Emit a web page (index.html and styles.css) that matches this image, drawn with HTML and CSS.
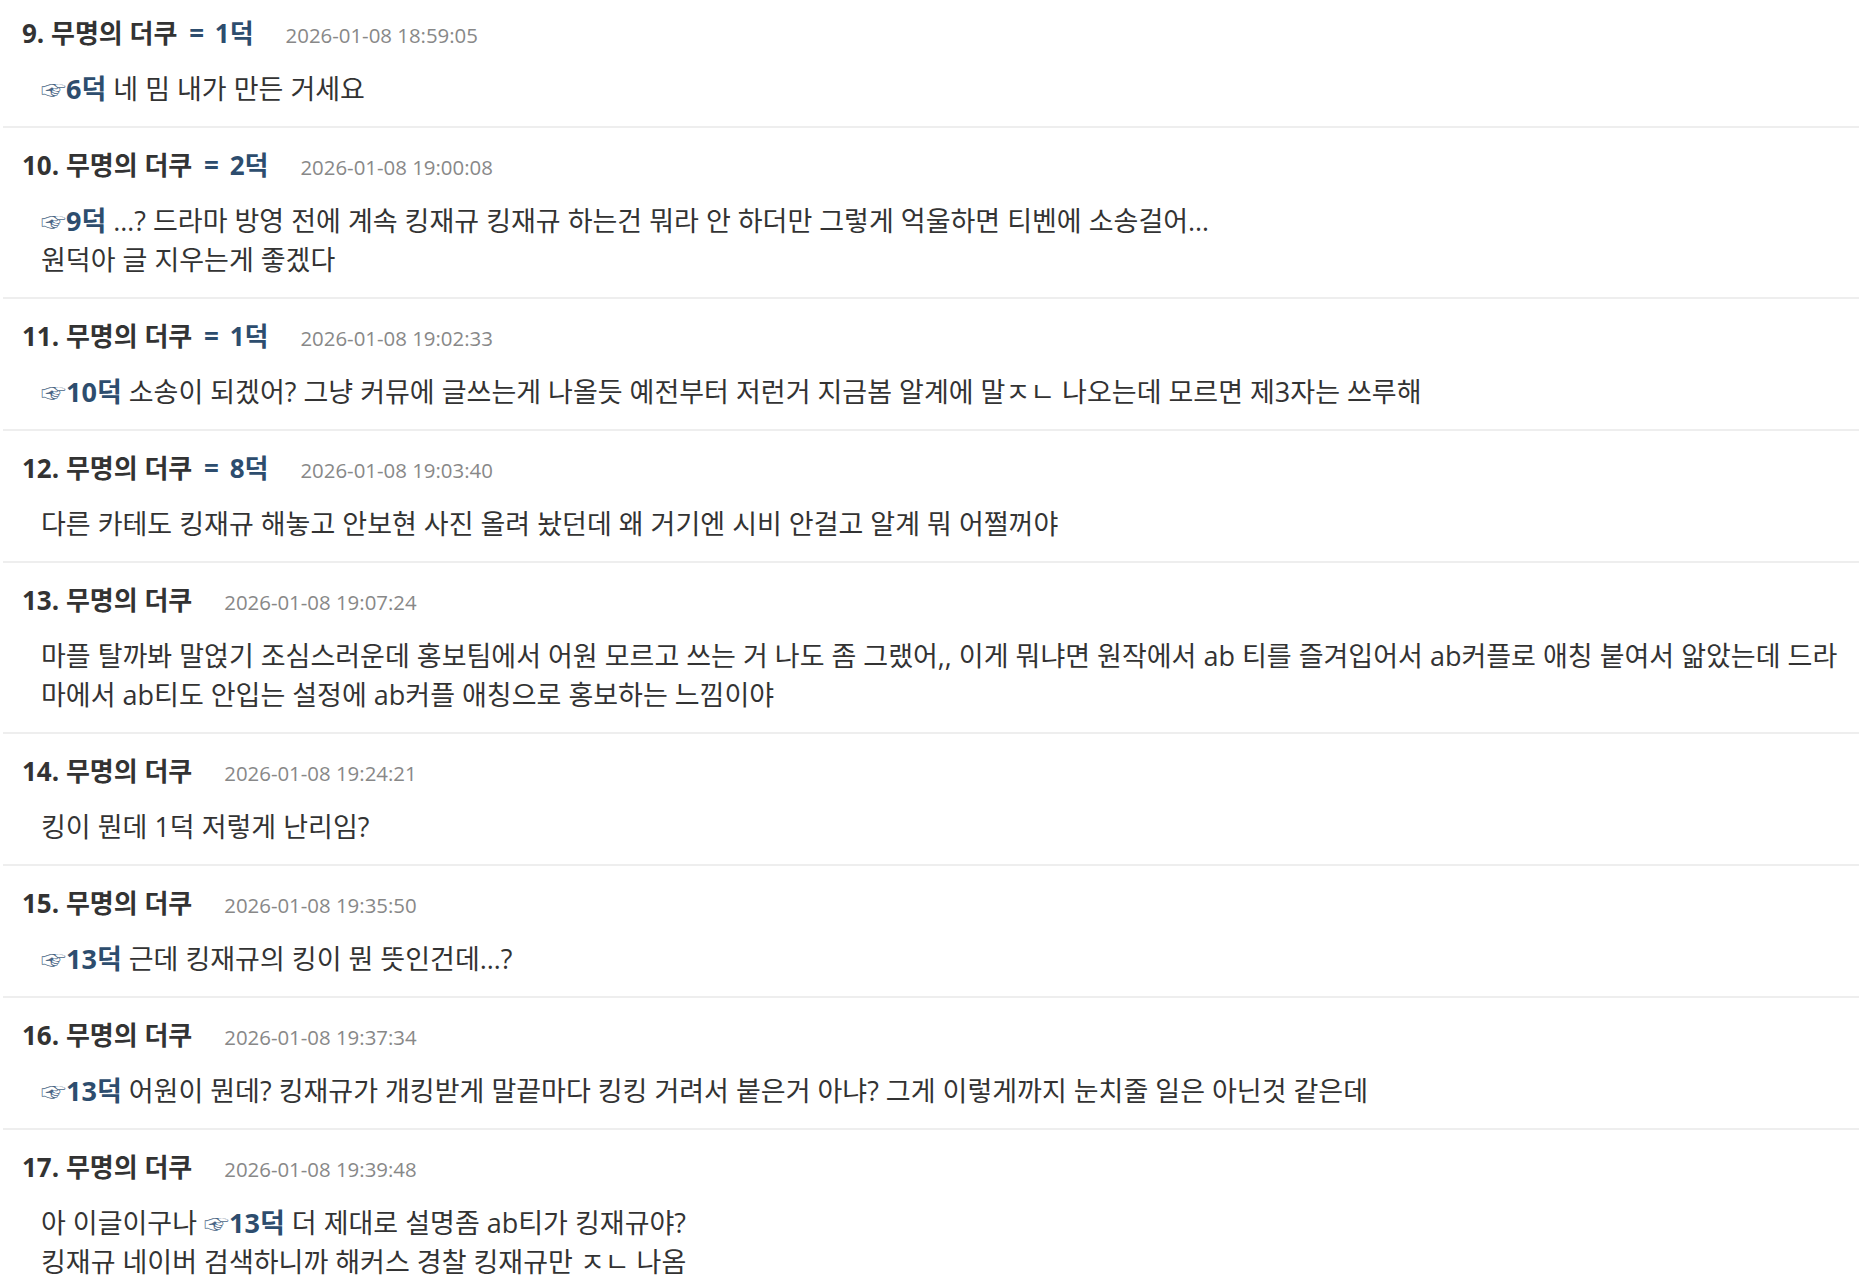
FILE: index.html
```html
<!DOCTYPE html>
<html lang="ko">
<head>
<meta charset="utf-8">
<title>댓글</title>
<link rel="stylesheet" href="styles.css">
</head>
<body>
<div class="thread">
  <div class="comment">
    <div class="head"><span class="name">9. 무명의 더쿠</span> <span class="tag">= 1덕</span><span class="date">2026-01-08 18:59:05</span></div>
    <div class="body"><span class="ref"><span class="hand">☞</span>6덕</span> 네 밈 내가 만든 거세요</div>
  </div>
  <div class="comment">
    <div class="head"><span class="name">10. 무명의 더쿠</span> <span class="tag">= 2덕</span><span class="date">2026-01-08 19:00:08</span></div>
    <div class="body"><span class="ref"><span class="hand">☞</span>9덕</span> …? 드라마 방영 전에 계속 킹재규 킹재규 하는건 뭐라 안 하더만 그렇게 억울하면 티벤에 소송걸어…<br>원덕아 글 지우는게 좋겠다</div>
  </div>
  <div class="comment">
    <div class="head"><span class="name">11. 무명의 더쿠</span> <span class="tag">= 1덕</span><span class="date">2026-01-08 19:02:33</span></div>
    <div class="body"><span class="ref"><span class="hand">☞</span>10덕</span> 소송이 되겠어? 그냥 커뮤에 글쓰는게 나올듯 예전부터 저런거 지금봄 알계에 말ㅈㄴ 나오는데 모르면 제3자는 쓰루해</div>
  </div>
  <div class="comment">
    <div class="head"><span class="name">12. 무명의 더쿠</span> <span class="tag">= 8덕</span><span class="date">2026-01-08 19:03:40</span></div>
    <div class="body">다른 카테도 킹재규 해놓고 안보현 사진 올려 놨던데 왜 거기엔 시비 안걸고 알계 뭐 어쩔꺼야</div>
  </div>
  <div class="comment">
    <div class="head"><span class="name">13. 무명의 더쿠</span><span class="date">2026-01-08 19:07:24</span></div>
    <div class="body">마플 탈까봐 말얹기 조심스러운데 홍보팀에서 어원 모르고 쓰는 거 나도 좀 그랬어,, 이게 뭐냐면 원작에서 ab 티를 즐겨입어서 ab커플로 애칭 붙여서 앎았는데 드라마에서 ab티도 안입는 설정에 ab커플 애칭으로 홍보하는 느낌이야</div>
  </div>
  <div class="comment">
    <div class="head"><span class="name">14. 무명의 더쿠</span><span class="date">2026-01-08 19:24:21</span></div>
    <div class="body">킹이 뭔데 1덕 저렇게 난리임?</div>
  </div>
  <div class="comment">
    <div class="head"><span class="name">15. 무명의 더쿠</span><span class="date">2026-01-08 19:35:50</span></div>
    <div class="body"><span class="ref"><span class="hand">☞</span>13덕</span> 근데 킹재규의 킹이 뭔 뜻인건데…?</div>
  </div>
  <div class="comment">
    <div class="head"><span class="name">16. 무명의 더쿠</span><span class="date">2026-01-08 19:37:34</span></div>
    <div class="body"><span class="ref"><span class="hand">☞</span>13덕</span> 어원이 뭔데? 킹재규가 개킹받게 말끝마다 킹킹 거려서 붙은거 아냐? 그게 이렇게까지 눈치줄 일은 아닌것 같은데</div>
  </div>
  <div class="comment">
    <div class="head"><span class="name">17. 무명의 더쿠</span><span class="date">2026-01-08 19:39:48</span></div>
    <div class="body">아 이글이구나 <span class="ref"><span class="hand">☞</span>13덕</span> 더 제대로 설명좀 ab티가 킹재규야?<br>킹재규 네이버 검색하니까 해커스 경찰 킹재규만 ㅈㄴ 나옴</div>
  </div>
</div>
</body>
</html>
```
FILE: styles.css
```css
html, body {
  margin: 0;
  background: #ffffff;
}

body {
  font-family: "Open Sans", "Noto Sans CJK KR", sans-serif;
  color: #333333;
}

.thread {
  padding: 0 4px 0 3px;
}

.comment {
  border-bottom: 2px solid #eeeeee;
  padding: 19px 19px 18px 19px;
}

.comment:first-child {
  padding-top: 15px;
}

.head {
  white-space: nowrap;
  font-size: 26px;
  line-height: 36px;
  height: 36px;
  font-weight: 700;
  color: #333333;
}

.tag {
  margin-left: 5px;
  word-spacing: 4px;
  color: #2d4d6e;
}

.date {
  margin-left: 32px;
  font-size: 20.4px;
  line-height: 20px;
  font-weight: 400;
  color: #888888;
}

.body {
  margin-top: 18px;
  padding-left: 19px;
  font-size: 27px;
  line-height: 39px;
  color: #333333;
}

.ref {
  font-weight: 700;
  color: #2d4d6e;
}

.hand {
  font-family: "Noto Sans CJK KR", sans-serif;
  font-weight: 400;
  font-size: 25px;
  line-height: 20px;
  color: #4a6685;
}
```
